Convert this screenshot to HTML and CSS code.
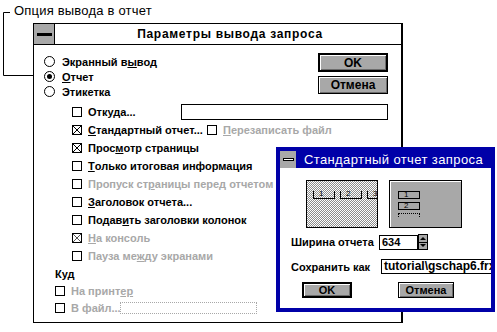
FILE: index.html
```html
<!DOCTYPE html>
<html lang="ru">
<head>
    <meta charset="UTF-8">
    <title>Параметры вывода запроса</title>
    <link rel="stylesheet" href="styles.css">
</head>
<body>
    <div id="tela">
        <p class="legenda">Опция вывода в отчет</p>
        <svg class="linhas" width="497" height="332">
            <polyline points="10,12.5 3.5,12.5 3.5,75.5 42,75.5" fill="none" stroke="#000" stroke-width="1"/>
        </svg>

        <div class="janela principal">
            <div class="titulo">
                <div class="menu-sistema"><span></span></div>
                <p>Параметры вывода запроса</p>
            </div>
            <div class="corpo">
                <div class="linha-topo">
                    <div class="radios">
                        <div class="opcao"><span class="radio"></span>Экранный в<u>ы</u>вод</div>
                        <div class="opcao"><span class="radio marcado"></span><u>О</u>тчет</div>
                        <div class="opcao"><span class="radio"></span>Этикетка</div>
                    </div>
                    <div class="botoes">
                        <button class="botao padrao">OK</button>
                        <button class="botao">Отмена</button>
                    </div>
                </div>

                <div class="lista">
                    <div class="opcao alta"><span class="caixa"></span>Откуда...<span class="campo origem"></span></div>
                    <div class="opcao alta"><span class="caixa x"></span><span class="rotulo-std"><u>С</u>тандартный отчет...</span><span class="caixa"></span><span class="cinza"><u>П</u>ерезаписать файл</span></div>
                    <div class="opcao alta"><span class="caixa x"></span>Прос<u>м</u>отр страницы</div>
                    <div class="opcao alta"><span class="caixa"></span><u>Т</u>олько итоговая информация</div>
                    <div class="opcao alta cinza"><span class="caixa"></span>Пропуск ст<u>р</u>аницы перед отчетом</div>
                    <div class="opcao alta"><span class="caixa"></span><u>З</u>аголовок отчета...</div>
                    <div class="opcao alta"><span class="caixa"></span>Подав<u>и</u>ть заголовки колонок</div>
                    <div class="opcao alta cinza"><span class="caixa x"></span><u>Н</u>а консоль</div>
                    <div class="opcao alta cinza"><span class="caixa"></span>Пауза ме<u>ж</u>ду экранами</div>
                </div>

                <div class="destino">
                    <div class="opcao media">Куд</div>
                    <div class="opcao media cinza"><span class="caixa"></span>На принт<u>ер</u></div>
                    <div class="opcao media cinza"><span class="caixa"></span><span class="rotulo-arq">В файл...</span><span class="campo pontilhado"></span></div>
                </div>
            </div>
        </div>

        <div class="janela padrao-rel">
            <div class="titulo azul">
                <div class="menu-sistema"><span></span></div>
                <p>Стандартный отчет запроса</p>
            </div>
            <div class="corpo">
                <div class="previas">
                    <div class="previa pontos">
                        <span class="col">1</span><span class="col">2</span><span class="col">3</span>
                    </div>
                    <div class="previa cheia">
                        <span class="col">1</span>
                        <span class="col">2</span>
                        <span class="col aberta"></span>
                    </div>
                </div>
                <div class="campo-linha">
                    <span class="rotulo">Ширина отчета</span>
                    <span class="campo num">634</span>
                    <span class="giro"><i class="seta-cima"></i><i class="seta-baixo"></i></span>
                </div>
                <div class="campo-linha salvar">
                    <span class="rotulo">Сохранить как</span>
                    <span class="campo arq">tutorial\gschap6.frx</span>
                </div>
                <div class="botoes-baixo">
                    <button class="botao padrao">OK</button>
                    <button class="botao">Отмена</button>
                </div>
            </div>
        </div>
    </div>
</body>
</html>
```
FILE: styles.css
```css
*{
    margin: 0px;
    padding: 0px;
    box-sizing: border-box;
}

body{
    background-color: white;
    font-family: "Liberation Sans", Arial, sans-serif;
    font-size: 11px;
    font-weight: bold;
    color: black;
}

#tela{
    position: relative;
    width: 497px;
    height: 332px;
    overflow: hidden;
}

.legenda{
    position: absolute;
    left: 14px;
    top: 3px;
    font-size: 13px;
    font-weight: normal;
    letter-spacing: 0.2px;
}

.linhas{
    position: absolute;
    left: 0px;
    top: 0px;
}

.janela{
    position: absolute;
    background-color: white;
}

.janela.principal{
    left: 33px;
    top: 23px;
    width: 370px;
    height: 300px;
    border: 1px solid black;
    border-right-width: 2px;
}

.titulo{
    display: flex;
    align-items: center;
    height: 21px;
    border-bottom: 1px solid black;
}
.titulo p{
    flex: 1;
    text-align: center;
    font-size: 12px;
    letter-spacing: 0.7px;
    padding-left: 4px;
}

.menu-sistema{
    width: 21px;
    height: 100%;
    background-color: #a8a8a8;
    border-right: 1px solid black;
    display: flex;
    align-items: center;
    justify-content: center;
}
.menu-sistema span{
    width: 15px;
    height: 3px;
    background-color: black;
}

.corpo{
    padding: 9px 13px 0px 10px;
}

.linha-topo{
    display: flex;
    justify-content: space-between;
}

.opcao{
    display: flex;
    align-items: center;
    height: 15px;
    white-space: nowrap;
}
.opcao.alta{ height: 18px; }
.opcao.media{ height: 17px; }

.radio{
    width: 11px;
    height: 11px;
    border: 1px solid black;
    border-radius: 50%;
    margin-right: 7px;
    display: flex;
    align-items: center;
    justify-content: center;
}
.radio.marcado::after{
    content: "";
    width: 5px;
    height: 5px;
    border-radius: 50%;
    background-color: black;
}

.botoes{
    display: flex;
    flex-direction: column;
    gap: 4px;
    margin-top: -1px;
}

.botao{
    font-family: "Liberation Sans", Arial, sans-serif;
    font-weight: bold;
    font-size: 12px;
    background-color: #a8a8a8;
    border: 1px solid black;
    box-shadow: inset 1px 1px 0px white, inset -1px -1px 0px #6c6c6c;
    color: black;
    width: 70px;
    height: 18px;
}
.botao.padrao{
    border-width: 2px;
    height: 19px;
}

.lista{
    margin-top: 4px;
    padding-left: 28px;
}

.caixa{
    width: 10px;
    height: 10px;
    border: 1px solid black;
    margin-right: 6px;
    flex-shrink: 0;
}
.caixa.x{
    background:
        linear-gradient(45deg, transparent 44%, black 44%, black 56%, transparent 56%),
        linear-gradient(-45deg, transparent 44%, black 44%, black 56%, transparent 56%);
}
.cinza .caixa.x{
    background:
        linear-gradient(45deg, transparent 44%, #555 44%, #555 56%, transparent 56%),
        linear-gradient(-45deg, transparent 44%, #555 44%, #555 56%, transparent 56%);
}

.cinza{
    color: #a8a8a8;
}

.rotulo-std{
    width: 119px;
}

.campo{
    border: 1px solid black;
    background-color: white;
}
.campo.origem{
    margin-left: auto;
    width: 207px;
    height: 16px;
}

.destino{
    padding-left: 11px;
}
.rotulo-arq{
    width: 49px;
}
.campo.pontilhado{
    border: 1px dotted #a8a8a8;
    width: 137px;
    height: 12px;
}

/* janela azul */
.janela.padrao-rel{
    left: 276px;
    top: 147px;
    width: 219px;
    height: 165px;
    border: 4px solid #0000a8;
    background-color: #0000a8;
}

.titulo.azul{
    height: 17px;
    background-color: #0000a8;
    border-bottom: none;
}
.titulo.azul .menu-sistema{
    width: 16px;
    border-right: none;
}
.titulo.azul .menu-sistema span{
    width: 11px;
    height: 3px;
    background-color: white;
    border: 1px solid black;
}
.titulo.azul p{
    color: white;
    font-weight: normal;
    font-size: 13px;
    letter-spacing: 0.4px;
    padding-left: 0px;
}

.padrao-rel .corpo{
    background-color: white;
    height: 140px;
    padding: 12px 0px 0px 11px;
    overflow: hidden;
}

.previas{
    display: flex;
    gap: 11px;
    margin-left: 15px;
}
.previa{
    width: 72px;
    height: 48px;
    border: 1px solid black;
    overflow: hidden;
    font-size: 8px;
    font-weight: normal;
}
.previa.pontos{
    background-color: #c4c4c4;
    background-image: repeating-conic-gradient(#8c8c8c 0 25%, white 0 50%);
    background-size: 2px 2px;
    display: flex;
    gap: 5px;
    padding: 10px 0px 0px 6px;
}
.previa.cheia{
    width: 73px;
    background-color: #a8a8a8;
    box-shadow: inset 1px 1px 0px white;
    display: flex;
    flex-direction: column;
    gap: 3px;
    padding: 10px 0px 0px 8px;
}
.col{
    display: block;
    width: 22px;
    height: 8px;
    border: 1px solid black;
    line-height: 6px;
    padding-left: 5px;
    flex-shrink: 0;
}
.previa.pontos .col{
    border-top: none;
}
.col.aberta{
    border: 1px dotted black;
    border-bottom: none;
    height: 4px;
}

.campo-linha{
    display: flex;
    align-items: center;
    height: 16px;
    margin-top: 6px;
}
.rotulo{
    width: 88px;
    flex-shrink: 0;
    white-space: nowrap;
}
.campo.num{
    width: 39px;
    height: 15px;
    padding-left: 2px;
    line-height: 13px;
}
.giro{
    display: flex;
    flex-direction: column;
    width: 10px;
    height: 16px;
    border: 1px solid black;
    background-color: #a8a8a8;
}
.giro i{
    flex: 1;
    display: flex;
    align-items: center;
    justify-content: center;
}
.giro i + i{
    border-top: 1px solid black;
}
.seta-cima::after{
    content: "";
    border: 3px solid transparent;
    border-bottom-color: black;
    border-top: none;
}
.seta-baixo::after{
    content: "";
    border: 3px solid transparent;
    border-top-color: black;
    border-bottom: none;
}

.campo-linha.salvar{
    margin-top: 9px;
    height: 15px;
}
.salvar .rotulo{
    width: 90px;
}
.campo.arq{
    width: 130px;
    height: 15px;
    padding-left: 2px;
    line-height: 13px;
    font-size: 12px;
    white-space: nowrap;
    overflow: hidden;
    flex-shrink: 0;
}

.botoes-baixo{
    display: flex;
    gap: 46px;
    margin-top: 8px;
    margin-left: 11px;
}
.botoes-baixo .botao{
    width: 56px;
    height: 16px;
    font-size: 11px;
}
.botoes-baixo .botao.padrao{
    width: 50px;
}
```
